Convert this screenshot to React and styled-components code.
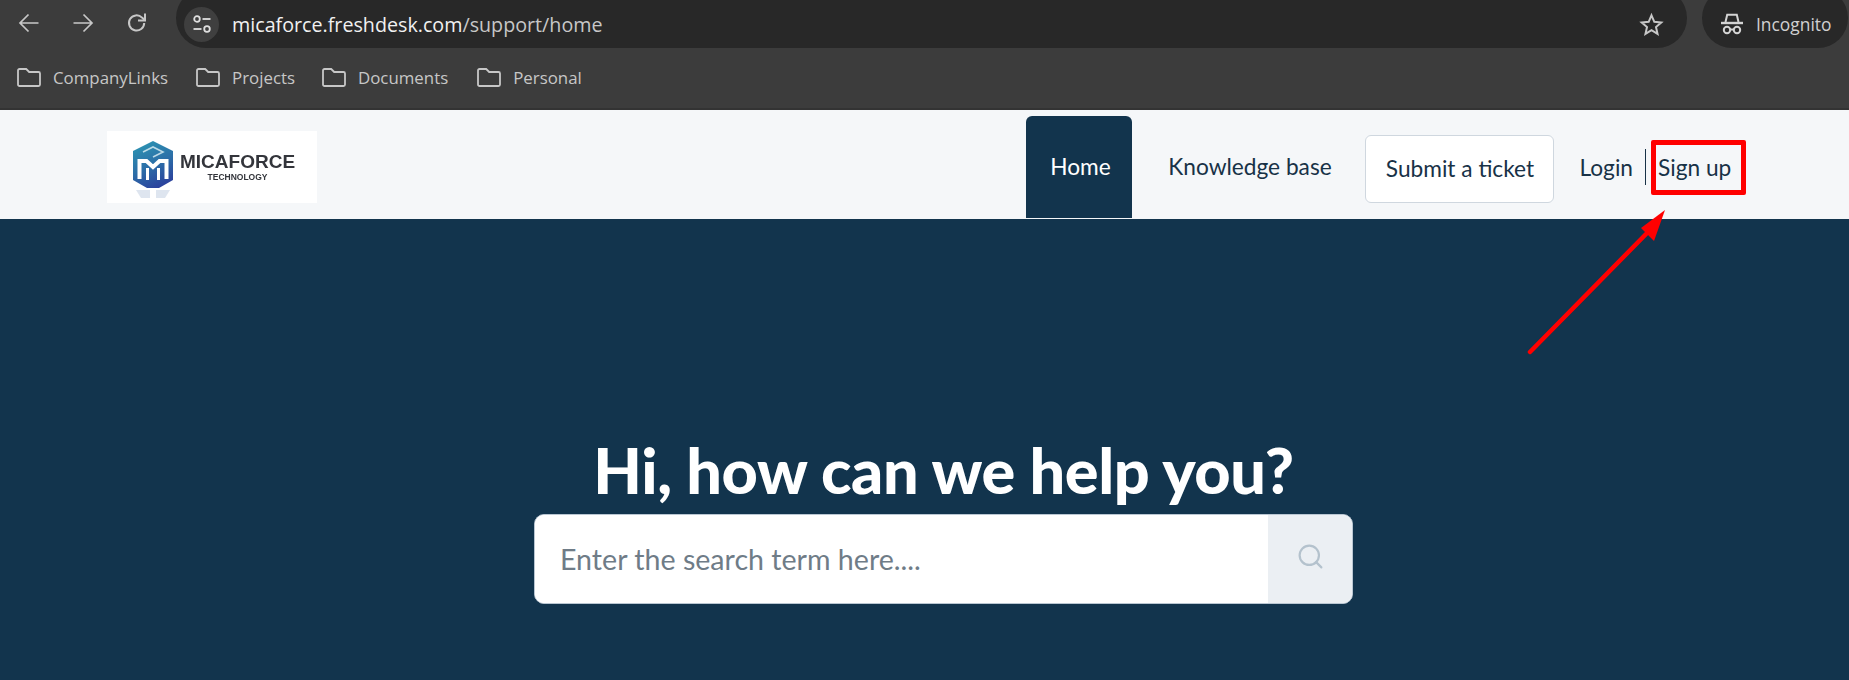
import React from "react";
import styled, { createGlobalStyle } from "styled-components";
import { Search } from "lucide-react";

const bookmarks = [
  { label: "CompanyLinks", gap: 28 },
  { label: "Projects", gap: 27 },
  { label: "Documents", gap: 29 },
  { label: "Personal", gap: 0 },
];

export default function App() {
  return (
    <>
      <GlobalStyle />
      <Page>
        <Toolbar>
          <NavIcons>
            <svg width="24" height="24" viewBox="0 0 24 24" fill="none" stroke="#c7c7c7" strokeWidth="1.7">
              <path d="M21.5 12H3.5M11.5 3.5 3 12l8.5 8.5" />
            </svg>
            <svg width="24" height="24" viewBox="0 0 24 24" fill="none" stroke="#c7c7c7" strokeWidth="1.7">
              <path d="M2.5 12h18M12.5 3.5 21 12l-8.5 8.5" />
            </svg>
            <svg width="24" height="24" viewBox="0 0 24 24" fill="none" stroke="#c7c7c7" strokeWidth="2">
              <path d="M19.2 12a7.6 7.6 0 1 1-2.2-5.4L19.6 9" />
              <path d="M20 2.6V9.6H13" />
            </svg>
          </NavIcons>
          <Omnibox>
            <SiteInfo>
              <svg width="20" height="20" viewBox="0 0 20 20" fill="none" stroke="#e0e0e0" strokeWidth="1.8">
                <circle cx="5" cy="5" r="2.8" />
                <path d="M10.5 5H18.5" />
                <circle cx="15" cy="15" r="2.8" />
                <path d="M1.5 15h8" />
              </svg>
            </SiteInfo>
            <Url>
              micaforce.freshdesk.com<UrlPath>/support/home</UrlPath>
            </Url>
            <StarSlot>
              <svg width="25" height="25" viewBox="0 0 24 24" fill="none" stroke="#c7c7c7" strokeWidth="1.9" strokeLinejoin="miter">
                <path d="M12 3.2l2.7 6.2 6.7.6-5.1 4.4 1.5 6.6L12 17.5l-5.8 3.5 1.5-6.6-5.1-4.4 6.7-.6z" />
              </svg>
            </StarSlot>
          </Omnibox>
          <IncognitoPill>
            <svg width="24" height="24" viewBox="0 0 24 24" fill="none" stroke="#d4d4d4" strokeWidth="2">
              <path d="M5.5 10 7.2 2.8h9.6L18.5 10" />
              <path d="M1 11h22" strokeWidth="2.4" />
              <circle cx="7" cy="18" r="3.2" />
              <circle cx="17" cy="18" r="3.2" />
              <path d="M10.2 17.5h3.6" />
            </svg>
            <span>Incognito</span>
          </IncognitoPill>
        </Toolbar>

        <BookmarksBar>
          {bookmarks.map((b) => (
            <Bookmark key={b.label} $gap={b.gap}>
              <svg width="24" height="19" viewBox="0 0 24 19" fill="none" stroke="#c7c7c7" strokeWidth="1.8">
                <path d="M1 2.5A1.5 1.5 0 0 1 2.5 1h6.7l3 3h9.3A1.5 1.5 0 0 1 23 5.5v11a1.5 1.5 0 0 1-1.5 1.5h-19A1.5 1.5 0 0 1 1 16.500z" />
              </svg>
              <span>{b.label}</span>
            </Bookmark>
          ))}
        </BookmarksBar>

        <Header>
          <Logo>
            <svg width="44" height="60" viewBox="0 0 44 60">
              <defs>
                <linearGradient id="cube" x1="0.3" y1="0" x2="0.7" y2="1">
                  <stop offset="0" stopColor="#2c93b2" />
                  <stop offset="0.5" stopColor="#2c6fa8" />
                  <stop offset="1" stopColor="#2b3f9c" />
                </linearGradient>
              </defs>
              <path fill="url(#cube)" d="M22 1 42 11v29L28 48H16L2 40V11z" />
              <path fill="none" stroke="#dff0f5" strokeWidth="1.6" opacity=".8" d="M12 12 22 7l10 5-10 5" />
              <path fill="none" stroke="#ffffff" strokeWidth="4" strokeLinejoin="miter" d="M8.500 39V21h7l6.500 6 6.500-6h7v18" />
              <path fill="none" stroke="#ffffff" strokeWidth="3" d="M16.500 40V28M27.500 40V28" />
              <path fill="#c3cfe2" opacity=".55" d="M5 50h14v8H10zM25 50h14l-5 8h-9z" />
            </svg>
            <LogoWords>
              <LogoName>MICAFORCE</LogoName>
              <LogoSub>TECHNOLOGY</LogoSub>
            </LogoWords>
          </Logo>
          <Nav>
            <HomeTab>Home</HomeTab>
            <NavLink>Knowledge base</NavLink>
            <SubmitButton>Submit a ticket</SubmitButton>
            <Login>Login</Login>
            <SignUp>Sign up</SignUp>
          </Nav>
        </Header>

        <Hero>
          <Heading>Hi, how can we help you?</Heading>
          <SearchBox>
            <SearchInput placeholder="Enter the search term here...." />
            <SearchAddon>
              <Search size={29} strokeWidth={1.8} />
            </SearchAddon>
          </SearchBox>
        </Hero>

        {/* red annotation drawn on top of the screenshot */}
        <Annotation width="1849" height="680" viewBox="0 0 1849 680">
          <path d="M1530 352 1651 229" stroke="#ff0000" strokeWidth="4.5" strokeLinecap="round" />
          <path d="M1665 210 1641 228 1654 241z" fill="#ff0000" />
        </Annotation>
      </Page>
    </>
  );
}

const chromeFont = `"Open Sans", "Noto Sans", sans-serif`;
const siteFont = `"Lato", "Noto Sans", sans-serif`;

const GlobalStyle = createGlobalStyle`
  html, body {
    margin: 0;
    padding: 0;
    background: #12344d;
  }
`;

const Page = styled.div`
  position: relative;
  width: 1849px;
  height: 680px;
  overflow: hidden;
  display: flex;
  flex-direction: column;
`;

const Toolbar = styled.div`
  height: 55px;
  flex: none;
  overflow: hidden;
  background: #3c3c3c;
  display: flex;
  align-items: flex-start;
  font-family: ${chromeFont};
`;

const NavIcons = styled.div`
  width: 176px;
  height: 46px;
  flex: none;
  display: flex;
  align-items: center;
  gap: 30px;
  padding-left: 17px;
  box-sizing: border-box;
`;

const Omnibox = styled.div`
  width: 1511px;
  height: 60px;
  margin-top: -12px;
  flex: none;
  border-radius: 30px;
  background: #282828;
  display: flex;
  align-items: center;
  padding: 12px 23px 0 8px;
  box-sizing: border-box;
`;

const SiteInfo = styled.div`
  width: 35px;
  height: 35px;
  border-radius: 50%;
  background: #3f3f3f;
  display: flex;
  align-items: center;
  justify-content: center;
  flex: none;
`;

const Url = styled.div`
  margin-left: 13px;
  flex: 1;
  font-size: 19.7px;
  color: #f1f1f1;
`;

const UrlPath = styled.span`
  color: #c7c7c7;
`;

const StarSlot = styled.div`
  display: flex;
`;

const IncognitoPill = styled.div`
  margin: -12px 1px 0 15px;
  height: 60px;
  flex: 1;
  border-radius: 30px;
  background: #282828;
  display: flex;
  align-items: center;
  gap: 12px;
  padding: 12px 0 0 18px;
  box-sizing: border-box;
  font-size: 17.4px;
  color: #d0d0d0;
`;

const BookmarksBar = styled.div`
  height: 55px;
  flex: none;
  padding: 0 0 8px 17px;
  box-sizing: border-box;
  background: #3c3c3c;
  border-bottom: 2px solid #333333;
  display: flex;
  align-items: center;
  font-family: ${chromeFont};
  font-size: 16.85px;
  color: #c7c7c7;
`;

const Bookmark = styled.div`
  display: flex;
  align-items: center;
  gap: 12px;
  margin-right: ${(props) => props.$gap}px;
`;

const Header = styled.div`
  height: 109px;
  flex: none;
  background: #f5f7f9;
  display: flex;
  justify-content: space-between;
  padding: 6px 103px 1px 107px;
  box-sizing: border-box;
  font-family: ${siteFont};
  font-size: 22.7px;
  color: #183247;
`;

const Logo = styled.div`
  width: 210px;
  height: 72px;
  margin-top: 15px;
  background: #fff;
  display: flex;
  align-items: center;
  gap: 5px;
  padding: 6px 0 0 24px;
  box-sizing: border-box;
  filter: blur(0.5px);
`;

const LogoWords = styled.div`
  display: flex;
  flex-direction: column;
  align-items: center;
  padding-bottom: 6px;
  font-family: "Liberation Sans", sans-serif;
  font-weight: 700;
  color: #33353b;
`;

const LogoName = styled.div`
  font-size: 19px;
  line-height: 20px;
`;

const LogoSub = styled.div`
  font-size: 8.5px;
  line-height: 10px;
`;

const Nav = styled.div`
  display: flex;
  align-items: flex-start;
`;

const HomeTab = styled.div`
  width: 106px;
  height: 102px;
  background: #12344d;
  color: #fff;
  border-radius: 6px 6px 0 0;
  display: flex;
  align-items: center;
  justify-content: center;
  padding: 0 0 2px 2px;
  box-sizing: border-box;
`;

const NavLink = styled.div`
  width: 233px;
  height: 102px;
  display: flex;
  align-items: center;
  justify-content: center;
  padding: 0 0 2px 2px;
  box-sizing: border-box;
`;

const SubmitButton = styled.div`
  width: 189px;
  height: 68px;
  margin-top: 19px;
  background: #fff;
  border: 1px solid #cfd7df;
  border-radius: 6px;
  display: flex;
  align-items: center;
  justify-content: center;
  padding-bottom: 1px;
  box-sizing: border-box;
`;

const Login = styled.div`
  margin-left: 25px;
  height: 36px;
  margin-top: 33px;
  padding-right: 12px;
  border-right: 1px solid #183247;
  display: flex;
  align-items: center;
`;

const SignUp = styled.div`
  margin: 24px 0 0 5px;
  width: 95px;
  height: 55px;
  border: 5px solid #ff0000;
  border-radius: 2px;
  display: flex;
  align-items: center;
  padding-left: 2px;
  box-sizing: border-box;
`;

const Hero = styled.div`
  flex: 1;
  background: #12344d;
  display: flex;
  flex-direction: column;
  align-items: center;
  padding: 215px 0 0 38px;
  font-family: ${siteFont};
`;

const Heading = styled.h1`
  margin: 0 0 8px;
  font-size: 63px;
  line-height: 72px;
  font-weight: 900;
  letter-spacing: -0.4px;
  color: #fff;
`;

const SearchBox = styled.div`
  width: 819px;
  height: 90px;
  flex: none;
  display: flex;
  border: 1px solid #b9c6d2;
  border-radius: 10px;
  overflow: hidden;
  box-sizing: border-box;
  background: #fff;
`;

const SearchInput = styled.input`
  flex: 1;
  min-width: 0;
  border: 0;
  outline: 0;
  padding: 0 25px;
  font-family: ${siteFont};
  font-size: 28.6px;
  background: #fff;
  &::placeholder {
    color: #6f7c87;
    opacity: 1;
  }
`;

const SearchAddon = styled.div`
  width: 84px;
  flex: none;
  background: #ebeff3;
  color: #b4c2cd;
  display: flex;
  align-items: center;
  justify-content: center;
  padding-bottom: 5px;
  box-sizing: border-box;
`;

const Annotation = styled.svg`
  position: absolute;
  left: 0;
  top: 0;
  pointer-events: none;
`;
